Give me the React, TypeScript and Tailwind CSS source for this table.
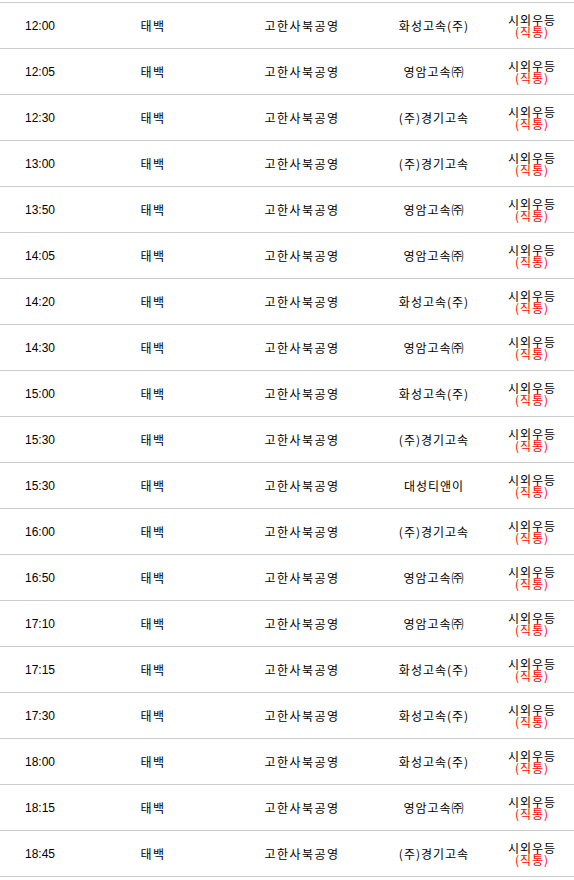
const rows: [string, string][] = [
  ['12:00', '화성고속(주)'],
  ['12:05', '영암고속㈜'],
  ['12:30', '(주)경기고속'],
  ['13:00', '(주)경기고속'],
  ['13:50', '영암고속㈜'],
  ['14:05', '영암고속㈜'],
  ['14:20', '화성고속(주)'],
  ['14:30', '영암고속㈜'],
  ['15:00', '화성고속(주)'],
  ['15:30', '(주)경기고속'],
  ['15:30', '대성티앤이'],
  ['16:00', '(주)경기고속'],
  ['16:50', '영암고속㈜'],
  ['17:10', '영암고속㈜'],
  ['17:15', '화성고속(주)'],
  ['17:30', '화성고속(주)'],
  ['18:00', '화성고속(주)'],
  ['18:15', '영암고속㈜'],
  ['18:45', '(주)경기고속'],
];

export default function App() {
  return (
    <div className="w-[574px] bg-white pt-[2px] text-[12px] text-black font-['Noto_Sans_CJK_KR','Noto_Sans',sans-serif]">
      <div className="border-t border-[#cccccc]">
        {rows.map(([time, company], i) => (
          <div
            key={`${time}-${i}`}
            className="grid h-[46px] grid-cols-[80px_146px_152px_112px_84px] items-center border-b border-[#cccccc] text-center leading-[14px]"
          >
            <span className="font-['Liberation_Sans',sans-serif]">{time}</span>
            <span className="tracking-[1.5px]">태백</span>
            <span className="tracking-[1.5px]">고한사북공영</span>
            <span className="tracking-[1px]">{company}</span>
            <span className="flex flex-col items-center gap-[1px] tracking-[1px] leading-[11px]">
              <span>시외우등</span>
              <span className="text-[#ff0000]">(직통)</span>
            </span>
          </div>
        ))}
      </div>
    </div>
  );
}
